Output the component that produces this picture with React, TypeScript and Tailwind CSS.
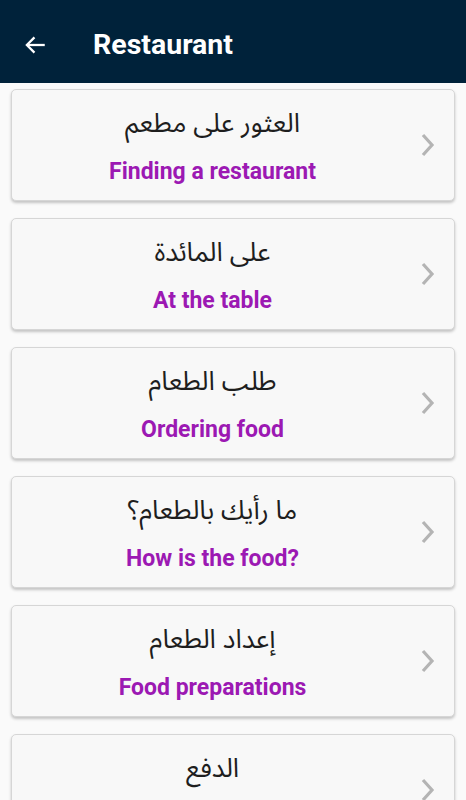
import React from "react";

const items = [
  { ar: "العثور على مطعم", en: "Finding a restaurant" },
  { ar: "على المائدة", en: "At the table" },
  { ar: "طلب الطعام", en: "Ordering food" },
  { ar: "ما رأيك بالطعام؟", en: "How is the food?" },
  { ar: "إعداد الطعام", en: "Food preparations" },
  { ar: "الدفع", en: "Payment" },
];

export default function App() {
  return (
    <div className="w-[466px] h-[800px] overflow-hidden bg-[#fafafa] flex flex-col" style={{ fontFamily: "Roboto, 'Noto Sans', sans-serif" }}>
      <div className="h-[83px] shrink-0 bg-[#00223a] flex items-center pt-[6px]">
        <svg className="ml-[22px]" width="26" height="26" viewBox="0 0 24 24" fill="none" stroke="white" strokeWidth="2.1">
          <path d="M21 12H4.5" />
          <path d="M11.5 5l-7 7 7 7" />
        </svg>
        <span className="ml-[45px] text-white text-[28.5px] font-bold leading-[34px]">Restaurant</span>
      </div>
      <div className="flex flex-col gap-[17px] px-[11px] pt-[6px]">
        {items.map((it, i) => (
          <div key={i} className="shrink-0 h-[112px] rounded-[5px] bg-[#f8f8f8] border border-[#d6d6d6] shadow-[0_2px_3px_rgba(0,0,0,0.22)] flex items-center">
            <div className="flex-1 flex flex-col items-center pr-[2px]">
              <div dir="rtl" className="text-[26.5px] text-[#1e1e1e] leading-[32px] mt-[4px]" style={{ fontFamily: "'Noto Sans Arabic', 'DejaVu Sans', sans-serif" }}>{it.ar}</div>
              <div className="text-[23px] font-bold text-[#9c19b3] leading-[28px] mt-[18px]">{it.en}</div>
            </div>
            <svg className="mr-[17px] ml-[4px]" width="18" height="26" viewBox="0 0 18 26" fill="none" stroke="#b4b4b4" strokeWidth="3.2">
              <path d="M4 3l9 10-9 10" />
            </svg>
          </div>
        ))}
      </div>
    </div>
  );
}
